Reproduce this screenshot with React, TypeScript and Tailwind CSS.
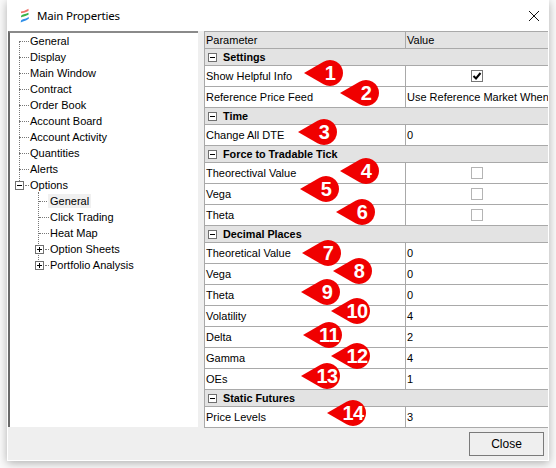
import type { ReactElement } from "react";

const FONT = "[font-family:'Liberation_Sans',Arial,sans-serif]";

// ===== Tree data =====
const treeRoots = [
  "General",
  "Display",
  "Main Window",
  "Contract",
  "Order Book",
  "Account Board",
  "Account Activity",
  "Quantities",
  "Alerts",
];

// ===== Table data =====
type Row =
  | { kind: "group"; label: string }
  | { kind: "text"; label: string; value: string }
  | { kind: "check"; label: string; checked: boolean };

const rows: Row[] = [
  { kind: "group", label: "Settings" },
  { kind: "check", label: "Show Helpful Info", checked: true },
  { kind: "text", label: "Reference Price Feed", value: "Use Reference Market When" },
  { kind: "group", label: "Time" },
  { kind: "text", label: "Change All DTE", value: "0" },
  { kind: "group", label: "Force to Tradable Tick" },
  { kind: "check", label: "Theorectival Value", checked: false },
  { kind: "check", label: "Vega", checked: false },
  { kind: "check", label: "Theta", checked: false },
  { kind: "group", label: "Decimal Places" },
  { kind: "text", label: "Theoretical Value", value: "0" },
  { kind: "text", label: "Vega", value: "0" },
  { kind: "text", label: "Theta", value: "0" },
  { kind: "text", label: "Volatility", value: "4" },
  { kind: "text", label: "Delta", value: "2" },
  { kind: "text", label: "Gamma", value: "4" },
  { kind: "text", label: "OEs", value: "1" },
  { kind: "group", label: "Static Futures" },
  { kind: "text", label: "Price Levels", value: "3" },
];

// ===== Callout markers, each one lies over the table =====
const markers = [
  { n: 1, pos: "left-[304px] top-[60px]" },
  { n: 2, pos: "left-[340px] top-[80px]" },
  { n: 3, pos: "left-[298px] top-[119px]" },
  { n: 4, pos: "left-[340px] top-[158px]" },
  { n: 5, pos: "left-[300px] top-[176px]" },
  { n: 6, pos: "left-[336px] top-[199px]" },
  { n: 7, pos: "left-[302px] top-[240px]" },
  { n: 8, pos: "left-[333px] top-[258px]" },
  { n: 9, pos: "left-[301px] top-[279px]" },
  { n: 10, pos: "left-[331px] top-[298px]" },
  { n: 11, pos: "left-[303px] top-[322px]" },
  { n: 12, pos: "left-[331px] top-[343px]" },
  { n: 13, pos: "left-[301px] top-[363px]" },
  { n: 14, pos: "left-[327px] top-[400px]" },
];

function Marker({ n, pos }: { n: number; pos: string }): ReactElement {
  return (
    <div className={`absolute ${pos} h-[26px] w-[39px]`}>
      <svg width="39" height="26" viewBox="0 0 39 26" className="absolute inset-0">
        <path d="M0 13 L19.5 1.74 A13 13 0 1 1 19.5 24.26 Z" fill="#f00000" />
      </svg>
      <span className="absolute left-[13px] top-0 flex h-[26px] w-[26px] items-center justify-center text-[20px] font-bold tracking-[-0.5px] text-white">
        {n}
      </span>
    </div>
  );
}

function ExpandBox({ open }: { open: boolean }): ReactElement {
  return (
    <span className="relative block size-[9px] shrink-0 border border-[#6f6f6f] bg-white">
      <span className="absolute left-[1px] top-[3px] h-px w-[5px] bg-black" />
      {!open && <span className="absolute left-[3px] top-[1px] h-[5px] w-px bg-black" />}
    </span>
  );
}

function TreeRow({
  label,
  depth,
  box,
  active,
}: {
  label: string;
  depth: 0 | 1;
  box?: "open" | "closed";
  active?: boolean;
}): ReactElement {
  return (
    <div className={`flex h-4 items-center ${depth === 0 ? "pl-[5px]" : "pl-[25px]"}`}>
      <span className="flex w-[9px] shrink-0 items-center">{box && <ExpandBox open={box === "open"} />}</span>
      {box ? (
        <span className="ml-px w-[4px] shrink-0 border-t border-dotted border-[#777]" />
      ) : (
        <span className="-ml-[5px] w-[10px] shrink-0 border-t border-dotted border-[#777]" />
      )}
      <span className={`-ml-px px-[2px] leading-[14px] whitespace-nowrap ${active ? "bg-[#f0f0f0]" : ""}`}>
        {label}
      </span>
    </div>
  );
}

function Tree(): ReactElement {
  return (
    <div className="relative h-[396px] w-[190px] shrink-0 border-t-[2px] border-l-[2px] border-t-[#8a8a8a] border-l-[#6a6a6a] bg-white">
      {/* dotted tree lines */}
      <span className="absolute left-[9px] top-[8px] h-[140px] border-l border-dotted border-[#777]" />
      <span className="absolute left-[28px] top-[159px] h-[72px] border-l border-dotted border-[#777]" />
      <div className="relative">
        {treeRoots.map((t) => (
          <TreeRow key={t} label={t} depth={0} />
        ))}
        <TreeRow label="Options" depth={0} box="open" />
        <TreeRow label="General" depth={1} active />
        <TreeRow label="Click Trading" depth={1} />
        <TreeRow label="Heat Map" depth={1} />
        <TreeRow label="Option Sheets" depth={1} box="closed" />
        <TreeRow label="Portfolio Analysis" depth={1} box="closed" />
      </div>
    </div>
  );
}

function CheckBox({ checked }: { checked: boolean }): ReactElement {
  return (
    <span
      className={`flex size-3 items-center justify-center border bg-white ${checked ? "border-[#777]" : "border-[#b4b4b4]"}`}
    >
      {checked && (
        <svg width="10" height="10" viewBox="0 0 10 10">
          <path d="M1.5 5 L4 7.5 L8.5 2" fill="none" stroke="#000" strokeWidth="2" />
        </svg>
      )}
    </span>
  );
}

function TableRow({ row }: { row: Row }): ReactElement {
  if (row.kind === "group") {
    return (
      <div className="flex h-[17px] items-center border-b border-[#a9a9a9] bg-[#e3e3e3] pl-[3px]">
        <ExpandBox open />
        <span className="ml-[6px] text-[10.8px] font-bold">{row.label}</span>
      </div>
    );
  }
  return (
    <div className="flex h-[21px] border-b border-[#a9a9a9] bg-white">
      <div className="flex w-[201px] shrink-0 items-center border-r border-[#a9a9a9] pl-px whitespace-nowrap">
        {row.label}
      </div>
      {row.kind === "check" ? (
        <div className="flex min-w-0 flex-1 items-center justify-center pr-[1px]">
          <CheckBox checked={row.checked} />
        </div>
      ) : (
        <div className="flex min-w-0 flex-1 items-center overflow-hidden pl-px whitespace-nowrap">{row.value}</div>
      )}
    </div>
  );
}

function PropertyTable(): ReactElement {
  return (
    <div className="h-[397px] w-[344px] shrink-0 overflow-hidden border-t border-l border-[#a9a9a9]">
      <div className="flex h-[17px] border-b border-[#a9a9a9] bg-[#e3e3e3]">
        <div className="flex w-[201px] shrink-0 items-center border-r border-[#a9a9a9] pl-px">Parameter</div>
        <div className="flex items-center pl-px">Value</div>
      </div>
      {rows.map((r, i) => (
        <TableRow key={i} row={r} />
      ))}
    </div>
  );
}

export default function App(): ReactElement {
  return (
    <div className={`relative h-[468px] w-[556px] overflow-hidden bg-[#fafafa] text-[11px] text-black ${FONT}`}>
      <div className="ml-[7px] flex h-[461px] w-[542px] flex-col border-x border-b border-white bg-[#efefef] shadow-[0_2px_9px_rgba(0,0,0,0.3)]">
        {/* Title bar */}
        <div className="flex h-[31px] shrink-0 items-center bg-white pl-[12px] pr-[9px]">
          <svg width="10" height="15" viewBox="0 0 10 15" className="shrink-0">
            <path d="M1 3.5 Q4 3.5 8.5 0.8 L8.5 3 Q5 5 1 5.2 Z" fill="#f0736a" />
            <path d="M1 8.5 Q1 7 3 6.6 Q6 6 8.5 4.8 L8.5 6.8 Q5 8.4 3 8.8 Q1.5 9 1 9.6 Z" fill="#37b24a" />
            <path d="M0.8 13.6 Q0.8 11.8 3 11.3 Q6 10.8 8.8 9 L8.8 10.8 Q6 13 3 13.6 Q1.5 14 0.8 14.6 Z" fill="#2f8fe8" />
          </svg>
          <span className="ml-[7px] mt-[1px] text-[11.5px] tracking-[-0.2px] [font-family:'Noto_Sans',sans-serif]">
            Main Properties
          </span>
          <svg width="10" height="10" viewBox="0 0 10 10" className="ml-auto shrink-0">
            <path d="M0 0 L10 10 M10 0 L0 10" stroke="#111" strokeWidth="1" fill="none" />
          </svg>
        </div>

        {/* Content */}
        <div className="flex gap-[6px]">
          <Tree />
          <PropertyTable />
        </div>

        {/* Footer */}
        <div className="flex justify-end pt-[4px] pr-[4px]">
          <button className="h-[24px] w-[75px] border border-[#7a7a7a] bg-[#efefef] text-[12px] text-black">
            Close
          </button>
        </div>
      </div>

      {markers.map((m) => (
        <Marker key={m.n} n={m.n} pos={m.pos} />
      ))}
    </div>
  );
}
